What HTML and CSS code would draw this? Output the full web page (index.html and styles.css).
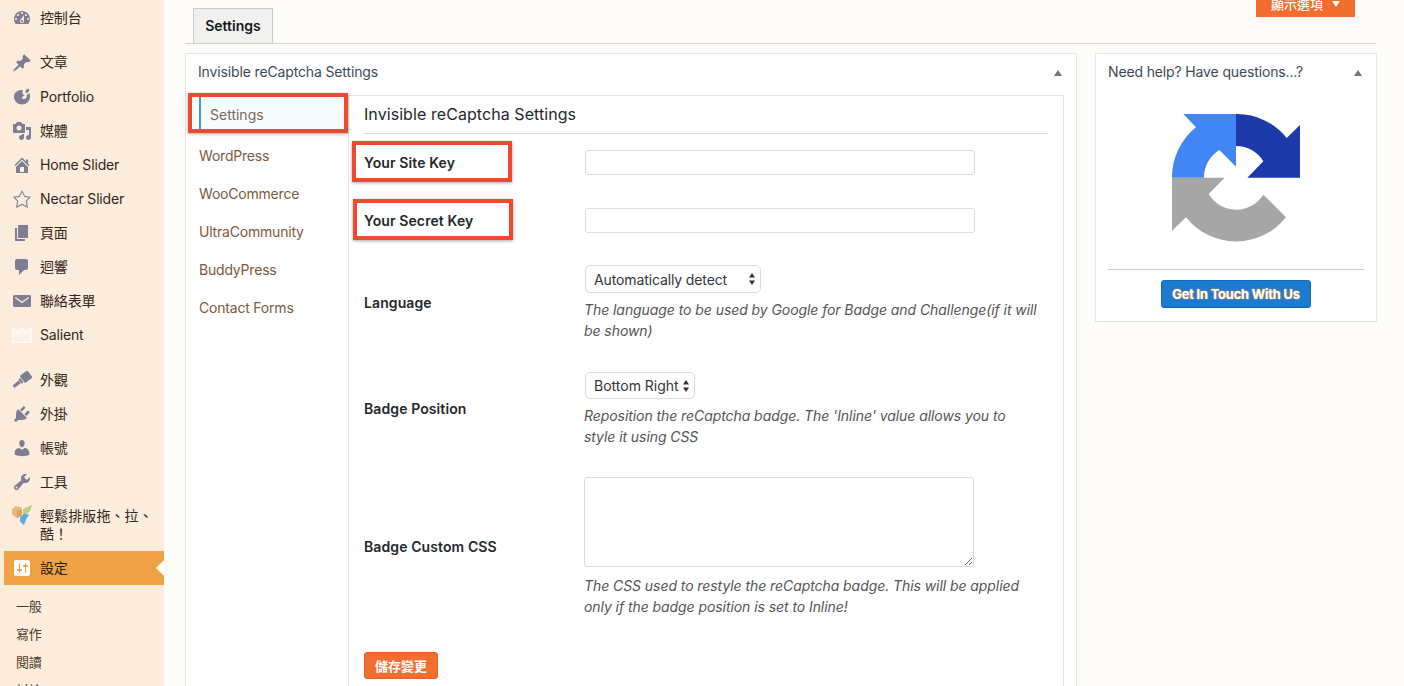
FILE: index.html
```html
<!DOCTYPE html>
<html lang="zh-Hant">
<head>
<meta charset="utf-8">
<title>Invisible reCaptcha Settings</title>
<link rel="stylesheet" href="styles.css">
</head>
<body>
<aside class="sidebar">
  <ul class="menu">
    <li class="item"><svg class="ico" viewBox="0 0 20 20"><path d="M3.760 16h12.480c1.100-1.370 1.760-3.110 1.760-5 0-4.420-3.580-8-8-8s-8 3.580-8 8c0 1.890.66 3.630 1.760 5zM10 4c.55 0 1 .45 1 1s-.45 1-1 1-1-.45-1-1 .45-1 1-1zM6 6c.55 0 1 .45 1 1s-.45 1-1 1-1-.45-1-1 .45-1 1-1zm8 0c.55 0 1 .45 1 1s-.45 1-1 1-1-.45-1-1 .45-1 1-1zm-5.370 5.550L12 7v6c0 1.100-.9 2-2 2s-2-.9-2-2c0-.57.24-1.080.63-1.450zM4 10c.55 0 1 .45 1 1s-.45 1-1 1-1-.45-1-1 .45-1 1-1zm12 0c.55 0 1 .45 1 1s-.45 1-1 1-1-.45-1-1 .45-1 1-1zm-5 3c0-.55-.45-1-1-1s-1 .45-1 1 .45 1 1 1 1-.45 1-1z"/></svg><span>控制台</span></li>
    <li class="item sep tall"><svg class="ico" viewBox="0 0 20 20"><path d="M10.440 3.020l1.820-1.820 6.360 6.350-1.830 1.820c-1.050-.68-2.480-.57-3.410.36l-.75.75c-.92.93-1.040 2.350-.35 3.400l-1.830 1.820-2.410-2.410-2.800 2.790c-.42.42-3.380 2.710-3.800 2.290s1.860-3.390 2.280-3.810l2.790-2.790L4.100 9.360l1.830-1.820c1.050.69 2.480.57 3.400-.36l.75-.75c.93-.92 1.050-2.350.36-3.410z"/></svg><span>文章</span></li>
    <li class="item"><svg class="ico" viewBox="0 0 20 20"><path d="M11 3.200c-.7 1.300-.8 2.800.1 4 1 1.200 3 1.500 4.400.6.800-.5 1.300-1.200 1.700-2 .5 1.200.8 2.500.8 3.700 0 4.500-3.600 8-8 8s-8-3.500-8-8c0-3.700 3.500-7 9-6.300zM13 8.200c-1.500.2-2.800 1.300-3 2.600-.1 1 .8 1.600 2 1.300 1.500-.3 2.700-1.500 2.800-2.700.1-.9-.7-1.400-1.800-1.200zM15.300 1.800c.8-.3 1.700.3 1.800 1.100.1 1-.9 2.500-2.100 2.900-.9.300-1.700-.4-1.500-1.400.2-1.100 1-2.200 1.800-2.600z" fill-rule="evenodd"/></svg><span>Portfolio</span></li>
    <li class="item"><svg class="ico" viewBox="0 0 20 20"><path d="M13 11V4c0-.55-.45-1-1-1h-1.670L9 1H5L3.670 3H2c-.55 0-1 .45-1 1v7c0 .55.45 1 1 1h10c.55 0 1-.45 1-1zM7 4.500c1.380 0 2.500 1.120 2.500 2.500S8.380 9.500 7 9.500 4.500 8.380 4.500 7 5.620 4.500 7 4.500zM14 6h5v10.500c0 1.380-1.120 2.500-2.500 2.500S14 17.880 14 16.500s1.120-2.500 2.500-2.500c.17 0 .34.020.5.050V9h-3V6zm-4 8.050V13h2v3.500c0 1.380-1.120 2.500-2.500 2.500S7 17.880 7 16.500 8.120 14 9.500 14c.17 0 .34.020.5.050z"/></svg><span>媒體</span></li>
    <li class="item"><svg class="ico" viewBox="0 0 20 20"><path d="M16 8.500l1.530 1.530-1.060 1.060L10 4.620l-6.470 6.470-1.060-1.060L10 2.500l4 4v-2h2v4zm-6-2.460l6 5.990V18H4v-5.970zM12 17v-5H8v5h4z"/></svg><span>Home Slider</span></li>
    <li class="item"><svg class="ico" viewBox="0 0 20 20"><path d="M10 1L7 7l-6 .75 4.130 4.620L4 19l6-3 6 3-1.120-6.630L19 7.750 13 7zm0 2.240l2.340 4.680 4.550.57-3.170 3.540.86 5.080L10 14.750l-4.580 2.360.86-5.080-3.170-3.540 4.550-.57z"/></svg><span>Nectar Slider</span></li>
    <li class="item"><svg class="ico" viewBox="0 0 20 20"><path d="M6 15V2h10v13H6zm-1 1h8v2H3V5h2v11z"/></svg><span>頁面</span></li>
    <li class="item"><svg class="ico" viewBox="0 0 20 20"><path d="M5 2h9c1.100 0 2 .9 2 2v7c0 1.100-.9 2-2 2h-2l-5 5v-5H5c-1.100 0-2-.9-2-2V4c0-1.100.9-2 2-2z"/></svg><span>迴響</span></li>
    <li class="item"><svg class="ico" viewBox="0 0 20 20"><path d="M2.500 4h15c.8 0 1.500.7 1.500 1.500v9c0 .8-.7 1.500-1.500 1.500h-15C1.700 16 1 15.300 1 14.500v-9C1 4.700 1.700 4 2.500 4zm7.500 8.300l6.800-5c.3-.2.4-.6.2-.9-.2-.3-.6-.3-.9-.1L10 10.600 3.900 6.300c-.3-.2-.7-.2-.9.1-.2.3-.1.7.2.900z" fill-rule="evenodd"/></svg><span>聯絡表單</span></li>
    <li class="item"><svg class="ico ico-crown" viewBox="0 0 20 20"><path d="M.8 3.500L5.500 8 10 2.800 14.500 8l4.700-4.500v13.700H.8z"/></svg><span>Salient</span></li>
    <li class="item sep"><svg class="ico" viewBox="0 0 20 20"><g transform="rotate(-38 10 10)"><rect x="10.500" y="5.500" width="9.500" height="9" rx="1"/><rect x="7.500" y="7.300" width="2.200" height="5.400"/><path d="M7 8.300V11.700L-.5 11.500-1 10l.5-1.500z"/></g></svg><span>外觀</span></li>
    <li class="item"><svg class="ico" viewBox="0 0 20 20"><path d="M13.110 4.360L9.870 7.600 8 5.730l3.240-3.240c.35-.34 1.050-.2 1.560.32.520.51.66 1.210.31 1.550zm-8 1.770l.91-1.120 9.010 9.010-1.190.840c-.71.710-2.580 1.160-3.820 1.160H6.140L4.900 17.260c-.59.590-1.540.59-2.120 0-.59-.58-.59-1.530 0-2.120l1.240-1.240v-3.880c0-1.130.4-3.190 1.090-3.890zm7.260 3.970l3.240-3.240c.34-.35 1.040-.21 1.550.31.520.51.66 1.210.31 1.560l-3.240 3.250z"/></svg><span>外掛</span></li>
    <li class="item"><svg class="ico" viewBox="0 0 20 20"><path d="M10 9.250c-2.270 0-2.730-3.440-2.730-3.440C7 4.020 7.820 2 9.970 2c2.160 0 2.980 2.020 2.710 3.810 0 0-.41 3.440-2.680 3.440zm0 2.570L12.720 10c2.390 0 4.520 2.330 4.520 4.530v2.490s-3.650 1.130-7.240 1.130c-3.650 0-7.240-1.130-7.240-1.130v-2.490c0-2.250 1.940-4.480 4.470-4.480z"/></svg><span>帳號</span></li>
    <li class="item"><svg class="ico" viewBox="0 0 20 20"><path d="M16.680 9.770c-1.340 1.340-3.300 1.670-4.950.99l-5.410 6.520c-.99.99-2.590.99-3.580 0s-.99-2.590 0-3.570l6.520-5.420c-.68-1.650-.35-3.610.99-4.950 1.280-1.280 3.120-1.620 4.720-1.060l-2.890 2.890 2.820 2.820 2.860-2.870c.53 1.580.18 3.390-1.080 4.650zM3.810 16.210c.4.390 1.040.39 1.430 0 .4-.4.4-1.040 0-1.430-.39-.4-1.030-.4-1.430 0-.39.39-.39 1.030 0 1.430z"/></svg><span>工具</span></li>
    <li class="item two"><svg class="ico ico-vc" viewBox="0 0 20 20"><path class="vc-o" d="M0 4l4-3 5.500 1.500.5 6-1 2.500-4.500 2L0 9.500z"/><path class="vc-od" d="M5 5.500l5-1 .2 4-1.200 2.500-4 2z"/><path class="vc-g" d="M11 4l9-4-2 6.500-6 3.500-1-2.500z"/><path class="vc-b" d="M8 12.500l4-4 5 1-3 5-2 5.500-4-3.500z"/></svg><span>輕鬆排版拖、拉、<br>酷！</span></li>
    <li class="item active"><svg class="ico" viewBox="0 0 20 20"><path d="M18 16V4c0-1.100-.9-2-2-2H4c-1.100 0-2 .9-2 2v12c0 1.100.9 2 2 2h12c1.100 0 2-.9 2-2zM8 11h1c.55 0 1 .45 1 1s-.45 1-1 1H8v1.500c0 .28-.22.5-.5.5s-.5-.22-.5-.5V13H6c-.55 0-1-.45-1-1s.45-1 1-1h1V5.500c0-.28.22-.5.5-.5s.5.220.5.500V11zm5-2h-1c-.55 0-1-.45-1-1s.45-1 1-1h1V5.500c0-.28.22-.5.5-.5s.5.220.5.500V7h1c.55 0 1 .45 1 1s-.45 1-1 1h-1v5.500c0 .28-.22.5-.5.5s-.5-.22-.5-.5V9z"/></svg><span>設定</span></li>
  </ul>
  <ul class="submenu">
    <li>一般</li>
    <li>寫作</li>
    <li>閱讀</li>
    <li>討論</li>
  </ul>
</aside>

<main class="content">
  <div class="topbar">
    <div class="tab">Settings</div>
    <div class="screen-options"><span>顯示選項</span><i class="down"></i></div>
  </div>
  <div class="columns">
    <section class="box box-main">
      <header class="box-head"><span>Invisible reCaptcha Settings</span><i class="caret"></i></header>
      <div class="panel">
        <nav class="nav">
          <a class="nav-link current">Settings</a>
          <a class="nav-link">WordPress</a>
          <a class="nav-link">WooCommerce</a>
          <a class="nav-link">UltraCommunity</a>
          <a class="nav-link">BuddyPress</a>
          <a class="nav-link">Contact Forms</a>
        </nav>
        <div class="form">
          <h2 class="form-title">Invisible reCaptcha Settings</h2>
          <div class="row row-first">
            <label class="label">Your Site Key</label>
            <div class="field"><input class="input" type="text"></div>
          </div>
          <div class="row">
            <label class="label">Your Secret Key</label>
            <div class="field"><input class="input" type="text"></div>
          </div>
          <div class="row row-tall row-lang">
            <label class="label">Language</label>
            <div class="field">
              <div class="select select-lang">Automatically detect<svg class="updown" viewBox="0 0 6 12"><path d="M3 0l3 4.500H0zM3 12L0 7.500h6z"/></svg></div>
              <p class="desc">The language to be used by Google for Badge and Challenge(if it will be shown)</p>
            </div>
          </div>
          <div class="row row-tall">
            <label class="label">Badge Position</label>
            <div class="field">
              <div class="select select-pos">Bottom Right<svg class="updown" viewBox="0 0 6 12"><path d="M3 0l3 4.500H0zM3 12L0 7.500h6z"/></svg></div>
              <p class="desc">Reposition the reCaptcha badge. The 'Inline' value allows you to style it using CSS</p>
            </div>
          </div>
          <div class="row row-tall row-css">
            <label class="label">Badge Custom CSS</label>
            <div class="field">
              <textarea class="textarea"></textarea>
              <p class="desc">The CSS used to restyle the reCaptcha badge. This will be applied only if the badge position is set to Inline!</p>
            </div>
          </div>
          <button class="save" type="button">儲存變更</button>
        </div>
      </div>
    </section>

    <section class="box box-side">
      <header class="box-head"><span>Need help? Have questions...?</span><i class="caret"></i></header>
      <div class="logo-wrap">
        <svg class="logo" viewBox="246 342 384 384">
          <path fill="#4285f4" d="M280 342H438V500L388 450A96 96 0 0 0 342 533H246A192 192 0 0 1 318 382Z"/>
          <path fill="#1c3aa9" d="M438 342A192 192 0 0 1 590 414L630 375V533H472L520 484A96 96 0 0 0 438 438Z"/>
          <path fill="#a6a6a6" d="M246 533H404L356 582A96 96 0 0 0 520 584L588 652A192 192 0 0 1 288 652L246 692Z"/>
        </svg>
      </div>
      <div class="cta-wrap"><button class="cta" type="button">Get In Touch With Us</button></div>
    </section>
  </div>
</main>

<div class="mark mark-1"></div>
<div class="mark mark-2"></div>
<div class="mark mark-3"></div>
</body>
</html>
```

FILE: styles.css
```css
* { box-sizing: border-box; }
html, body { margin: 0; height: 686px; overflow: hidden; }
body {
  position: relative;
  display: flex;
  background: #fefcf9;
  font-family: Inter, "Noto Sans CJK TC", sans-serif;
  font-size: 14px;
  color: #23282d;
}
ul { list-style: none; margin: 0; padding: 0; }

/* sidebar */
.sidebar { width: 164px; flex: none; background: #fbecdb; padding-top: 1px; color: #33261b; letter-spacing: -.16px; }
.item { display: flex; align-items: center; height: 34px; padding-left: 12px; }
.item span { margin: 0 0 2px 8px; line-height: 21px; }
.item.sep { margin-top: 11px; }
.item.sep.tall { margin-top: 10px; height: 35px; }
.item.two { height: 52px; align-items: flex-start; padding-top: 6px; }
.item.two span { line-height: 18px; margin-top: 2px; letter-spacing: .1px; }
.ico { width: 20px; height: 20px; flex: none; fill: #7e7d93; overflow: visible; }
.ico-crown { fill: #fcf2e7; stroke: #fffaf5; stroke-width: 1.8; }
.vc-o { fill: #e9b677; }
.vc-od { fill: #dfa25f; }
.vc-g { fill: #b9d07d; }
.vc-b { fill: #5fa9de; }
.active { background: #f0a244; margin-left: 4px; padding-left: 8px; position: relative; color: #2b1d10; }
.active .ico { fill: #fff; }
.active::after {
  content: "";
  position: absolute;
  right: 0;
  top: 9px;
  border: 8px solid transparent;
  border-right-color: #fefcf9;
  border-left: 0;
}
.submenu { padding-top: 7px; }
.submenu li { height: 28px; line-height: 28px; padding-left: 16px; font-size: 13px; color: #4a3a2c; }

/* main */
.content { flex: 1; padding: 0 27px 0 21px; min-width: 0; }
.topbar {
  display: flex;
  justify-content: space-between;
  height: 44px;
  border-bottom: 1px solid #d5d3cf;
  padding: 8px 21px 0 8px;
  margin-right: 1px;
  margin-bottom: 9px;
}
.tab {
  width: 80px;
  height: 36px;
  background: #f0f1ee;
  border: 1px solid #ccc;
  font-weight: 600;
  text-align: center;
  line-height: 34px;
  color: #15191d;
}
.screen-options {
  display: flex;
  align-items: center;
  justify-content: center;
  gap: 9px;
  width: 99px;
  height: 28px;
  margin-top: -19px;
  background: #f26d30;
  color: #fff;
  font-size: 13px;
  font-weight: 500;
}
.down { width: 0; height: 0; border: 4px solid transparent; border-top: 6px solid #fff; border-bottom: 0; margin-top: 1px; }
.columns { display: grid; grid-template-columns: 892px 282px; column-gap: 18px; align-items: start; }
.box { background: #fff; border: 1px solid #e1e6ea; }
.box-head { display: flex; justify-content: space-between; align-items: center; height: 37px; padding: 0 14px 0 12px; color: #3d4a55; letter-spacing: -.14px; }
.box-head span { margin-bottom: 2px; }
.caret { width: 0; height: 0; border: 4px solid transparent; border-bottom: 6px solid #72777c; border-top: 0; }
.box-main { height: 700px; padding: 0 12px 0 3px; }
.box-side { height: 269px; }
.box-main .box-head { padding: 0 2px 0 9px; margin-bottom: 4px; }

.panel { display: flex; height: 640px; border-top: 1px solid #e1e6ea; border-right: 1px solid #e1e6ea; margin-left: 10px; }
.nav { width: 150px; flex: none; border-right: 1px solid #e1e6ea; display: flex; flex-direction: column; }
.nav-link { display: block; height: 38px; line-height: 38px; color: #7d5a3a; letter-spacing: -.2px; }
.nav-link.current { height: 37px; margin-bottom: 4px; line-height: 37px; color: #7b6a58; padding-left: 9px; border-left: 2px solid #3b9bd8; background: #f6fbfe; letter-spacing: 0; }
.form { flex: 1; padding: 0 15px; }
.form-title { margin: 0; height: 38px; line-height: 36px; font-size: 16px; font-weight: 400; letter-spacing: .07px; border-bottom: 1px solid #d8d8d8; color: #23282d; }
.row { display: flex; align-items: center; padding: 16px 0; }
.row-first { padding-bottom: 17px; }
.row-lang { padding-bottom: 15px; }
.row-css { padding-top: 14px; padding-bottom: 0; }
.label { width: 221px; flex: none; font-weight: 600; color: #23282d; letter-spacing: .1px; }
.row-tall .label { margin-bottom: 2px; }
.field { flex: 1; min-width: 0; }
.input { display: block; width: 390px; height: 25px; background: #fff; border: 1px solid #ddd; border-radius: 3px; }
.select {
  display: flex;
  align-items: center;
  justify-content: space-between;
  height: 28px;
  padding: 0 5px 0 8px;
  background: #fff;
  border: 1px solid #ddd;
  border-radius: 5px;
  color: #33373b;
  letter-spacing: -.12px;
}
.select-lang { width: 176px; }
.select-pos { width: 110px; height: 27px; letter-spacing: 0; }
.updown { width: 6px; height: 12px; fill: #333; }
.desc { margin: 6px 0 0 -1px; font-style: italic; line-height: 21px; color: #555; width: 455px; letter-spacing: -.07px; }
.row-css .desc { margin: 8px 0 0; }
.row-css .field { margin-left: -1px; }
.textarea { display: block; width: 390px; height: 90px; border: 1px solid #ddd; border-radius: 3px; background: #fff; }
.save {
  display: block;
  width: 74px;
  height: 27px;
  margin-top: 35px;
  padding: 0;
  border: 1px solid #e0632a;
  border-radius: 3px;
  background: #f26d30;
  color: #fff;
  font: 700 13px Inter, "Noto Sans CJK TC", sans-serif;
}

/* side */
.logo-wrap { margin: 23px 12px 0; height: 156px; border-bottom: 1px solid #ccc; text-align: center; }
.logo { display: block; width: 128px; height: 128px; margin: 0 auto; }
.cta-wrap { display: flex; justify-content: center; padding-top: 10px; }
.cta {
  width: 150px;
  height: 28px;
  padding: 0;
  border: 1px solid #1568b5;
  border-radius: 3px;
  background: #1b7ad2;
  color: #fff;
  font: 700 13px Inter, sans-serif;
  letter-spacing: -.25px;
  text-shadow: 0 0 2px #e09a45, 0 0 1px #e09a45;
}

/* annotation frames over the shot */
.mark {
  position: absolute;
  border: 4px solid #ee4a2f;
  box-shadow: 0 1px 3px rgba(0,0,0,.35);
  pointer-events: none;
}
.mark-1 { left: 188px; top: 93px; width: 160px; height: 40px; }
.mark-2 { left: 352px; top: 141px; width: 160px; height: 41px; }
.mark-3 { left: 353px; top: 199px; width: 160px; height: 41px; }
```
